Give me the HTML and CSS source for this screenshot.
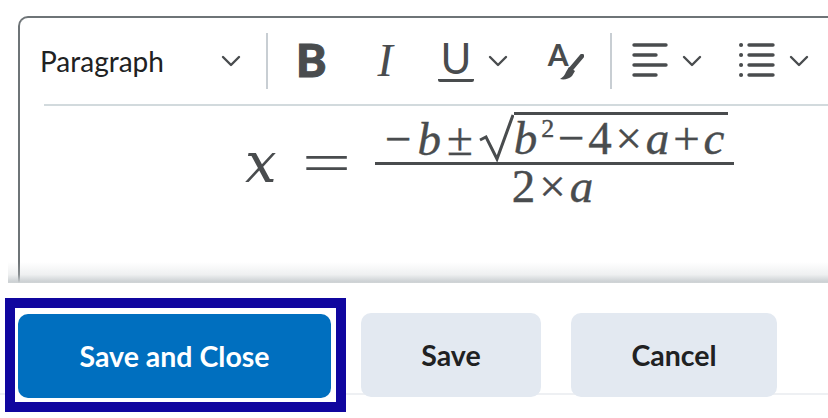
FILE: index.html
```html
<!DOCTYPE html>
<html>
<head>
  <title>Equation editor</title>
  <link rel="stylesheet" href="styles.css">
</head>
<body>
<div class="main">
  <div class="editor">
    <div class="toolbar">
      <div class="block-select">
        <span>Paragraph</span>
        <svg class="chevron" viewBox="0 0 20 12"><path d="M2 2l8 8 8-8"/></svg>
      </div>
      <div class="divider"></div>
      <span class="tool tool-bold">B</span>
      <span class="tool tool-italic">I</span>
      <span class="tool tool-underline">U</span>
      <svg class="chevron chevron-underline" viewBox="0 0 20 12"><path d="M2 2l8 8 8-8"/></svg>
      <span class="tool tool-color">
        <span class="color-letter">A</span>
        <svg class="brush" viewBox="0 0 24 26"><path class="brush-handle" d="M22 2L11 15"/><path class="brush-tip" d="M0 25c4 1 9 0 12-3l3-5-6-4-3 5c-1 3-3 5-6 7z"/></svg>
      </span>
      <div class="divider divider-align"></div>
      <svg class="lines" viewBox="0 0 36 36"><path d="M2 2h32M2 12h22M2 22h32M2 32h22"/></svg>
      <svg class="chevron chevron-align" viewBox="0 0 20 12"><path d="M2 2l8 8 8-8"/></svg>
      <svg class="lines lines-list" viewBox="0 0 36 36"><path d="M10 2h24M10 12h24M10 22h24M10 32h24"/><path class="dots" d="M2 2h.1M2 12h.1M2 22h.1M2 32h.1"/></svg>
      <svg class="chevron chevron-list" viewBox="0 0 20 12"><path d="M2 2l8 8 8-8"/></svg>
    </div>
    <div class="content">
      <div class="math">
        <span class="math-x">x</span>
        <span class="math-eq">=</span>
        <div class="fraction">
          <div class="numerator">
            <span class="sign-part">−<i>b</i>±</span>
            <svg class="radical" viewBox="0 0 35 48"><path d="M1 26l6-3 11 22L34 1"/></svg>
            <span class="radicand"><i>b</i><sup>2</sup>−4×<i>a</i>+<i>c</i></span>
          </div>
          <div class="denominator">2×<i>a</i></div>
        </div>
      </div>
    </div>
  </div>
  <div class="shade"></div>
</div>
<div class="footer">
  <div class="focus-ring"><button class="btn btn-primary">Save and Close</button></div>
  <button class="btn btn-save">Save</button>
  <button class="btn btn-cancel">Cancel</button>
</div>
</body>
</html>
```

FILE: styles.css
```css
:root {
  --icon-color: #494c4e;
  --text-color: #202122;
  --line-color: #d2dadd;
  --button-bg: #e3e9f1;
  --primary-color: #006fbf;
  --focus-color: #10069f;
}

html, body {
  margin: 0;
  height: 100%;
  background-color: #ffffff;
  overflow: hidden;
}

body {
  font-family: Lato, sans-serif;
  color: var(--text-color);
}

.main {
  padding: 16px 0 0 8px;
}

.editor {
  margin-left: 10px;
  height: 267px;
  box-sizing: border-box;
  border: 2px solid #6e7477;
  border-width: 2px 0 0 2px;
  border-top-left-radius: 10px;
}

.toolbar {
  display: flex;
  align-items: center;
  height: 86px;
  margin-left: 24px;
  border-bottom: 2px solid var(--line-color);
}

.block-select {
  display: flex;
  align-items: center;
  width: 201px;
  margin-left: -4px;
  font-size: 28px;
}

.block-select span {
  width: 182px;
}

.chevron {
  width: 20px;
  height: 12px;
  flex: none;
  fill: none;
  stroke: var(--icon-color);
  stroke-width: 2.400;
  stroke-linecap: round;
  stroke-linejoin: round;
}

.divider {
  width: 2px;
  height: 56px;
  margin-left: 25px;
  background-color: #c8ced3;
}

.tool {
  color: var(--icon-color);
  line-height: 1;
}

.tool-bold {
  margin-top: -3px;
  margin-left: 28px;
  font-size: 46px;
  font-weight: 900;
  -webkit-text-stroke: 1px var(--icon-color);
}

.tool-italic {
  margin-left: 51px;
  font-family: "Liberation Serif", serif;
  font-style: italic;
  font-size: 46px;
}

.tool-underline {
  margin-top: -3px;
  margin-left: 45px;
  width: 36px;
  border-bottom: 3px solid var(--icon-color);
  border-radius: 2px;
  font-size: 42px;
  text-align: center;
}

.chevron-underline {
  margin-left: 14px;
}

.tool-color {
  position: relative;
  width: 36px;
  height: 38px;
  margin-left: 40px;
}

.color-letter {
  display: block;
  font-size: 30px;
  font-weight: 700;
  line-height: 24px;
}

.brush {
  position: absolute;
  right: 0;
  bottom: 0;
  width: 24px;
  height: 26px;
}

.brush-handle {
  fill: none;
  stroke: var(--icon-color);
  stroke-width: 4.500;
  stroke-linecap: round;
}

.brush-tip {
  fill: var(--icon-color);
}

.divider-align {
  margin-left: 26px;
}

.lines {
  width: 36px;
  height: 36px;
  margin-left: 20px;
  flex: none;
  fill: none;
  stroke: var(--icon-color);
  stroke-width: 3.400;
  stroke-linecap: round;
}

.lines .dots {
  stroke-width: 4;
}

.chevron-align {
  margin-left: 14px;
}

.lines-list {
  margin-left: 37px;
}

.chevron-list {
  margin-left: 14px;
}

.content {
  padding: 4px 0 0 225px;
}

.math {
  display: flex;
  align-items: center;
  font-family: "Liberation Serif", serif;
  font-size: 47px;
  color: var(--icon-color);
  -webkit-text-stroke: 0.400px var(--icon-color);
}

.math-x {
  width: 57px;
  margin-top: 8px;
  font-family: "DejaVu Serif", serif;
  font-style: italic;
  font-size: 56px;
  line-height: 60px;
  -webkit-text-stroke: 0;
}

.math-eq {
  width: 73px;
  margin-top: 8px;
  font-size: 58px;
  line-height: 60px;
  transform: scaleX(1.500);
  transform-origin: 0 50%;
  -webkit-text-stroke: 0;
}

.fraction {
  width: 359px;
  text-align: center;
}

.numerator {
  display: flex;
  align-items: flex-end;
  height: 52px;
  padding-left: 10px;
  line-height: 46px;
  border-bottom: 3px solid var(--icon-color);
}

.sign-part {
  letter-spacing: 6px;
}

.radical {
  width: 35px;
  height: 48px;
  flex: none;
  fill: none;
  stroke: var(--icon-color);
  stroke-width: 3;
}

.radicand {
  height: 47px;
  border-top: 3px solid var(--icon-color);
  letter-spacing: 3.800px;
}

.radicand sup {
  font-size: 26px;
  line-height: 0;
}

.denominator {
  line-height: 42px;
  letter-spacing: 4px;
}

.shade {
  position: relative;
  height: 21px;
  margin-top: -21px;
  background: linear-gradient(to bottom, rgba(200, 205, 208, 0), rgba(200, 205, 208, 0.300) 60%, rgba(200, 205, 208, 0.900) 92%, #d0d4d6);
}

.footer {
  display: flex;
  align-items: center;
  margin-top: 15px;
  padding-left: 5px;
  background:
    linear-gradient(to bottom, transparent 95px, #eef0f3 95px, #eef0f3 97px, transparent 97px),
    linear-gradient(to right, transparent 18px, #eef0f3 18px, #eef0f3 20px, transparent 20px);
}

.focus-ring {
  padding: 6px 5px 4px 3px;
  border: 10px solid var(--focus-color);
  background-color: #ffffff;
}

.btn {
  display: block;
  height: 84px;
  border: none;
  border-radius: 10px;
  background-color: var(--button-bg);
  color: var(--text-color);
  font-family: Lato, sans-serif;
  font-size: 28.500px;
  font-weight: 700;
}

.btn-primary {
  width: 313px;
  background-color: var(--primary-color);
  color: #ffffff;
}

.btn-save {
  width: 180px;
  margin-left: 15px;
}

.btn-cancel {
  width: 206px;
  margin-left: 30px;
}
```
